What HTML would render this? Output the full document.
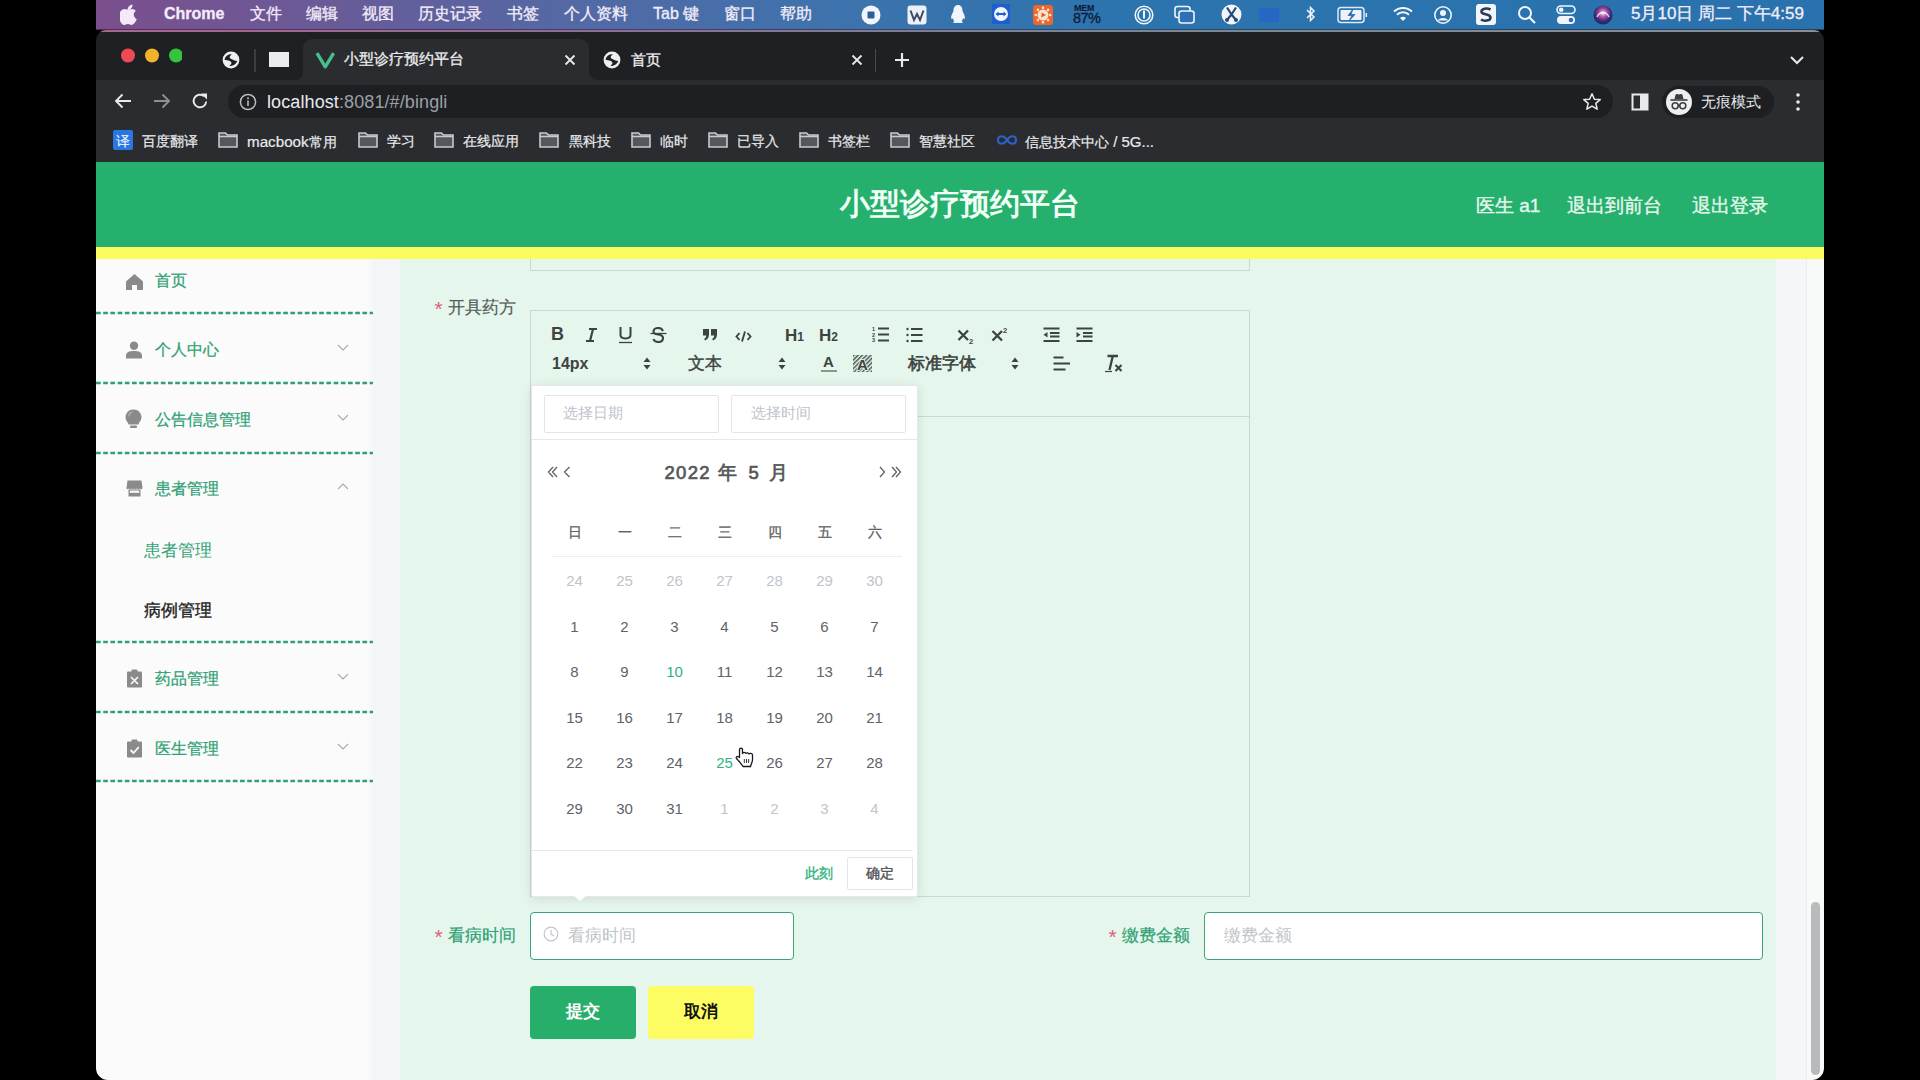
<!DOCTYPE html>
<html><head><meta charset="utf-8">
<style>
*{margin:0;padding:0;box-sizing:border-box}
html,body{width:1920px;height:1080px;overflow:hidden;background:#000;font-family:"Liberation Sans",sans-serif}
.a{position:absolute}
.t{position:absolute;white-space:nowrap;line-height:1}
#menubar{left:96px;top:0;width:1728px;height:30px;background:linear-gradient(90deg,#7a4f8e 0%,#77518f 3%,#675c99 14.7%,#5568a4 26.3%,#3d73ac 43%,#2c74ae 59%,#2a72ad 100%)}
#menubar .t{color:#f4ecf8;font-size:16px;top:6px;-webkit-text-stroke:0.3px #f4ecf8}
#win{left:96px;top:30px;width:1728px;height:1050px;background:#1f2023;border-radius:10px 10px 0 0;overflow:hidden}
#toolbar{left:0;top:50px;width:1728px;height:82px;background:#2b2c2f}
#omni{left:132px;top:55px;width:1385px;height:33px;background:#1e1f22;border-radius:17px}
.dash{position:absolute;left:0;width:276px;height:3px;background:repeating-linear-gradient(90deg,#34a578 0 8px,transparent 8px 12px)}
.bmk{top:103.5px;font-size:14px;color:#e8eaed;-webkit-text-stroke:0.2px #e8eaed}
.mi{position:absolute;color:#2ea876;font-size:17px;line-height:1;white-space:nowrap}

.pg{position:absolute}
.zh{position:absolute;white-space:nowrap;line-height:1}
.ico{position:absolute}
.cal{position:absolute;width:40px;text-align:center;font-size:15px;line-height:1;color:#606266}
.cal.o{color:#c0c4cc}
.cal.g{color:#2fb380}
.wk{position:absolute;width:40px;text-align:center;font-size:14px;line-height:1;color:#606266;-webkit-text-stroke:0.3px #606266}
</style></head><body>
<div id="menubar" class="a">
  <div class="a" style="left:0;top:29px;width:1728px;height:1px;background:linear-gradient(90deg,#5a2a55,#4a3a6a 30%,#2c4a66 60%,#24405a)"></div>

  <svg class="a" style="left:24px;top:4px" width="18" height="21" viewBox="0 0 18 21"><path fill="#f3e9f7" d="M12.5 0.5c0.2 1.5-0.5 3-1.4 4s-2.3 1.6-3.5 1.5c-0.2-1.4 0.5-2.9 1.4-3.8 1-1 2.4-1.6 3.5-1.7zM16.8 15.2c-0.5 1.1-0.7 1.6-1.4 2.6-0.9 1.4-2.2 3.1-3.8 3.1-1.4 0-1.8-0.9-3.7-0.9s-2.3 0.9-3.7 0.9c-1.6 0-2.8-1.6-3.7-3C-1.1 14 -1.4 9.5 0.6 7.2 1.6 5.9 3.2 5 4.7 5c1.5 0 2.5 0.9 3.8 0.9 1.2 0 2-0.9 3.7-0.9 1.3 0 2.7 0.7 3.7 2-3.3 1.8-2.7 6.5 0.9 8.2z"/></svg>
  <svg class="a" style="left:765px;top:5px" width="20" height="20"><circle cx="10" cy="10" r="9.5" fill="#f2f5fb"/><rect x="6.5" y="6.5" width="7" height="7" rx="1" fill="#2d5d9c"/></svg>
  <svg class="a" style="left:811px;top:5px" width="20" height="20"><rect x="0.5" y="0.5" width="19" height="19" rx="3" fill="#eef2f8"/><path d="M3.5 5.5 L7 15 L10 9 L13 15 L16.5 5.5" stroke="#3c4a66" stroke-width="2" fill="none"/></svg>
  <svg class="a" style="left:853px;top:4px" width="18" height="21"><path fill="#f2f5fb" d="M9 1c3 0 4.5 2.5 4.5 5.5 0 1 0.5 1.5 1.2 3 1 2 1.6 4 0.8 5.2-0.4 0.5-1 0-1.5-0.7 0 1.3-0.6 2.5-1.5 3.2 1 0.4 1.5 0.8 1.2 1.3-0.4 0.6-3 0.5-4.7 0.2-1.7 0.3-4.3 0.4-4.7-0.2-0.3-0.5 0.2-0.9 1.2-1.3-0.9-0.7-1.5-1.9-1.5-3.2-0.5 0.7-1.1 1.2-1.5 0.7-0.8-1.2-0.2-3.2 0.8-5.2 0.7-1.5 1.2-2 1.2-3C4.5 3.5 6 1 9 1z"/></svg>
  <svg class="a" style="left:896px;top:4px" width="18" height="20"><rect x="0" y="0" width="18" height="20" fill="#1e5fd0"/><circle cx="9" cy="10" r="7" fill="#f2f5fb"/><path d="M3.5 10 L6.5 7.5 V9 H11.5 V7.5 L14.5 10 L11.5 12.5 V11 H6.5 V12.5Z" fill="#1e5fd0"/></svg>
  <svg class="a" style="left:937px;top:5px" width="20" height="20"><rect x="0" y="0" width="20" height="20" rx="3" fill="#f0652a"/><circle cx="10" cy="10" r="5.5" fill="#fbe3cf"/><path d="M8.5 7.5 L13 10 L8.5 12.5Z" fill="#e8572a"/><g fill="#fbe3cf"><circle cx="10" cy="2.8" r="1.3"/><circle cx="10" cy="17.2" r="1.3"/><circle cx="2.8" cy="10" r="1.3"/><circle cx="17.2" cy="10" r="1.3"/><circle cx="4.9" cy="4.9" r="1.3"/><circle cx="15.1" cy="4.9" r="1.3"/><circle cx="4.9" cy="15.1" r="1.3"/><circle cx="15.1" cy="15.1" r="1.3"/></g></svg>
  <div class="t" style="left:978px;top:4px;font-size:9px;font-weight:bold;color:#101a35;letter-spacing:-0.3px;-webkit-text-stroke:0.1px #101a35">MEM</div>
  <div class="t" style="left:977px;top:11px;font-size:14.5px;color:#101a35;letter-spacing:-0.6px;-webkit-text-stroke:0.3px #101a35">87%</div>
  <svg class="a" style="left:1038px;top:5px" width="20" height="20"><circle cx="10" cy="10" r="8.8" stroke="#f2f5fb" stroke-width="1.6" fill="none"/><circle cx="10" cy="10" r="6" stroke="#f2f5fb" stroke-width="1.6" fill="none"/><rect x="9" y="5.5" width="2" height="8" fill="#f2f5fb"/></svg>
  <svg class="a" style="left:1078px;top:5px" width="22" height="20"><rect x="1" y="1.5" width="15" height="11" rx="2.5" stroke="#f2f5fb" stroke-width="1.6" fill="none"/><rect x="5" y="6" width="15" height="12" rx="2.5" stroke="#f2f5fb" stroke-width="1.6" fill="#2e6fb6"/></svg>
  <svg class="a" style="left:1125px;top:4px" width="21" height="21"><circle cx="10.5" cy="10.5" r="10" fill="#f2f5fb"/><path d="M10.5 10.5 L6 3.5 M10.5 10.5 L15 3.5 M10.5 10.5 L6 16 M10.5 10.5 L15 16" stroke="#244a7a" stroke-width="2.2"/><circle cx="6" cy="16" r="2" fill="#244a7a"/><circle cx="15" cy="16" r="2" fill="#244a7a"/></svg>
  <div class="a" style="left:1163px;top:8px;width:20px;height:14px;background:#2767c4;border-radius:1px"></div>
  <svg class="a" style="left:1209px;top:4px" width="12" height="20"><path d="M2 6 L9 13 L5.5 16.5 V3.5 L9 7 L2 14" stroke="#f2f5fb" stroke-width="1.5" fill="none"/></svg>
  <svg class="a" style="left:1241px;top:6px" width="32" height="18"><rect x="1" y="1.5" width="26" height="15" rx="3" stroke="#dfe8f5" stroke-width="1.5" fill="none"/><rect x="3.5" y="4" width="21" height="10" rx="1" fill="#eef3fa"/><path d="M16 3 L11 9.5 H15 L12 15 L18 8.5 H14Z" fill="#2e6fb6" stroke="#2e6fb6" stroke-width="0.8"/><rect x="28.5" y="7" width="1.6" height="4" fill="#dfe8f5"/></svg>
  <svg class="a" style="left:1297px;top:5px" width="20" height="18"><path d="M1 6.5 A13 13 0 0 1 19 6.5" stroke="#f2f5fb" stroke-width="2" fill="none"/><path d="M4 9.8 A8.5 8.5 0 0 1 16 9.8" stroke="#f2f5fb" stroke-width="2" fill="none"/><path d="M7 13 A4 4 0 0 1 13 13 L10 16Z" fill="#f2f5fb"/></svg>
  <svg class="a" style="left:1337px;top:5px" width="20" height="20"><circle cx="10" cy="10" r="8.2" stroke="#f2f5fb" stroke-width="1.6" fill="none"/><circle cx="10" cy="8" r="3" fill="#f2f5fb"/><path d="M4.8 15.5 C6 12 14 12 15.2 15.5" fill="#f2f5fb"/></svg>
  <svg class="a" style="left:1380px;top:4px" width="20" height="22"><rect x="0" y="0" width="20" height="21" rx="3" fill="#f2f5fb"/><path d="M14.5 5.5 C11 3.5 5 4.5 5.5 8 C6 11 14.5 9.5 14.5 13.5 C14.5 17 8 17.5 5 15.5" stroke="#2b3a55" stroke-width="2.6" fill="none"/></svg>
  <svg class="a" style="left:1421px;top:5px" width="20" height="20"><circle cx="8" cy="8" r="6" stroke="#f2f5fb" stroke-width="2" fill="none"/><path d="M12.5 12.5 L18 18" stroke="#f2f5fb" stroke-width="2.2"/></svg>
  <svg class="a" style="left:1460px;top:5px" width="20" height="20"><rect x="1" y="1" width="18" height="7.5" rx="3.75" stroke="#f2f5fb" stroke-width="1.6" fill="none"/><circle cx="5.2" cy="4.75" r="2.3" fill="#f2f5fb"/><rect x="1" y="11" width="18" height="8" rx="4" fill="#f2f5fb"/><circle cx="15" cy="15" r="2.3" fill="#2e6fb6"/></svg>
  <svg class="a" style="left:1497px;top:5px" width="20" height="20"><defs><radialGradient id="siri" cx="50%" cy="40%" r="60%"><stop offset="0" stop-color="#e6f0ff"/><stop offset="0.35" stop-color="#b34fa6"/><stop offset="0.7" stop-color="#3a2a7a"/><stop offset="1" stop-color="#1d2a55"/></radialGradient></defs><circle cx="10" cy="10" r="9.5" fill="url(#siri)"/><path d="M4 12 C7 6 13 6 16 12" stroke="#ffffff" stroke-width="1.3" fill="none" opacity="0.8"/></svg>
  <div class="t" style="left:68px;font-weight:bold">Chrome</div>
  <div class="t" style="left:154px">文件</div>
  <div class="t" style="left:210px">编辑</div>
  <div class="t" style="left:266px">视图</div>
  <div class="t" style="left:322px">历史记录</div>
  <div class="t" style="left:411px">书签</div>
  <div class="t" style="left:468px">个人资料</div>
  <div class="t" style="left:557px">Tab 键</div>
  <div class="t" style="left:628px">窗口</div>
  <div class="t" style="left:684px">帮助</div>
  <div class="t" style="left:1535px;font-size:17px;top:5px">5月10日 周二 下午4:59</div>
</div>
<div id="win" class="a">

  <div class="a" style="left:0;top:0;width:1728px;height:1.5px;background:linear-gradient(90deg,#a86690,#8a7094 30%,#7a8696 60%,#8a8f96)"></div>
  <svg class="a" style="left:22px;top:18px" width="64" height="16"><circle cx="10" cy="7.5" r="7" fill="#ec4b54"/><circle cx="34" cy="7.5" r="7" fill="#f0b32b"/><circle cx="58" cy="7.5" r="7" fill="#34c43e"/></svg>
  <svg class="a" style="left:126px;top:21px" width="18" height="18" viewBox="0 0 18 18"><circle cx="9" cy="9" r="8.4" fill="#eeeff1"/><path d="M2.5 8.8 A6.8 6.8 0 0 1 9.8 3.2 C8.5 4.5 7.2 5.5 7.8 6.8 C8.5 8.2 10 8 11.5 9 C12.8 9.8 14 9.6 15.2 9.9 A6.8 6.8 0 0 1 7.4 14.8 C8.5 13.8 9.8 13 9.4 11.6 C9 10 7 9.5 5 9.2 Z" fill="#1f2023"/></svg>
  <div class="a" style="left:158px;top:19px;width:2px;height:23px;background:#3c3d41"></div>
  <div class="a" style="left:173px;top:22px;width:20px;height:15px;background:#ebecee"></div>
  <div class="a" style="left:207px;top:9px;width:286px;height:42px;background:#2b2c2f;border-radius:9px 9px 0 0"></div><svg class="a" style="left:199px;top:42px" width="8" height="8"><path d="M0 8 H8 V0 A8 8 0 0 1 0 8Z" fill="#2b2c2f"/></svg><svg class="a" style="left:493px;top:42px" width="8" height="8"><path d="M0 0 V8 H8 A8 8 0 0 1 0 0Z" fill="#2b2c2f"/></svg>
  <svg class="a" style="left:219px;top:21px" width="21" height="18"><path d="M2 2.2 L10.3 15.8 L18.6 2.2" stroke="#45c08c" stroke-width="3.4" fill="none" stroke-linejoin="round"/></svg>
  <div class="t" style="left:248px;top:22px;font-size:14.5px;color:#eceef0;-webkit-text-stroke:0.3px #eceef0">小型诊疗预约平台</div>
  <svg class="a" style="left:468px;top:24px" width="12" height="12"><path d="M1.5 1.5 L10.5 10.5 M10.5 1.5 L1.5 10.5" stroke="#e8eaed" stroke-width="1.8"/></svg>
  <svg class="a" style="left:507px;top:21px" width="18" height="18" viewBox="0 0 18 18"><circle cx="9" cy="9" r="8.4" fill="#eeeff1"/><path d="M2.5 8.8 A6.8 6.8 0 0 1 9.8 3.2 C8.5 4.5 7.2 5.5 7.8 6.8 C8.5 8.2 10 8 11.5 9 C12.8 9.8 14 9.6 15.2 9.9 A6.8 6.8 0 0 1 7.4 14.8 C8.5 13.8 9.8 13 9.4 11.6 C9 10 7 9.5 5 9.2 Z" fill="#1f2023"/></svg>
  <div class="t" style="left:535px;top:22px;font-size:15px;color:#eceef0;-webkit-text-stroke:0.3px #eceef0">首页</div>
  <svg class="a" style="left:755px;top:24px" width="12" height="12"><path d="M1.5 1.5 L10.5 10.5 M10.5 1.5 L1.5 10.5" stroke="#e8eaed" stroke-width="1.8"/></svg>
  <div class="a" style="left:779px;top:19px;width:1px;height:23px;background:#4a4b4f"></div>
  <svg class="a" style="left:798px;top:22px" width="16" height="16"><path d="M8 1 V15 M1 8 H15" stroke="#e8eaed" stroke-width="2.2"/></svg>
  <svg class="a" style="left:1693px;top:24px" width="16" height="12"><path d="M2 3 L8 9 L14 3" stroke="#e8eaed" stroke-width="2" fill="none"/></svg>
  <div id="toolbar" class="a">
    <svg class="a" style="left:18px;top:13px" width="18" height="16"><path d="M17 8 H2 M8.5 1.5 L2 8 L8.5 14.5" stroke="#e8eaed" stroke-width="1.9" fill="none"/></svg>
    <svg class="a" style="left:57px;top:13px" width="18" height="16"><path d="M1 8 H16 M9.5 1.5 L16 8 L9.5 14.5" stroke="#8e9094" stroke-width="1.9" fill="none"/></svg>
    <svg class="a" style="left:95px;top:12px" width="18" height="18"><path d="M15.2 9.5 A6.3 6.3 0 1 1 13 4.2" stroke="#e8eaed" stroke-width="1.9" fill="none"/><path d="M10 1.5 H16 V7.5Z" fill="#e8eaed"/></svg>
</div>
  <div id="omni" class="a">
    <svg class="a" style="left:11px;top:8px" width="18" height="18"><circle cx="9" cy="9" r="7.6" stroke="#b8babd" stroke-width="1.5" fill="none"/><rect x="8.2" y="7.5" width="1.6" height="5.5" fill="#b8babd"/><circle cx="9" cy="5.2" r="1" fill="#b8babd"/></svg>
    <div class="t" style="left:39px;top:8px;font-size:18px;letter-spacing:0.1px;color:#e8eaed">localhost<span style="color:#9aa0a6">:8081/#/bingli</span></div>
    <svg class="a" style="left:1354px;top:7px" width="20" height="20"><path d="M10 1.8 L12.4 7.2 L18.2 7.6 L13.8 11.4 L15.2 17.2 L10 14.1 L4.8 17.2 L6.2 11.4 L1.8 7.6 L7.6 7.2Z" stroke="#e8eaed" stroke-width="1.5" fill="none" stroke-linejoin="round"/></svg>
</div>
  <svg class="a" style="left:1535px;top:63px" width="18" height="18"><rect x="1.5" y="1.5" width="15" height="15" stroke="#e8eaed" stroke-width="2" fill="none"/><rect x="9" y="1.5" width="7.5" height="15" fill="#e8eaed"/></svg>
  <div class="a" style="left:1566px;top:56px;width:112px;height:32px;background:#1e1f22;border-radius:16px"></div>
  <svg class="a" style="left:1570px;top:59px" width="26" height="26"><circle cx="13" cy="13" r="13" fill="#eeeff1"/><path d="M8.5 10 L9.6 5.8 C9.8 5 10.3 4.8 11 5 L13 5.6 L15 5 C15.7 4.8 16.2 5 16.4 5.8 L17.5 10Z" fill="#3a3b3f"/><rect x="4.5" y="10.2" width="17" height="1.6" fill="#3a3b3f"/><circle cx="9.2" cy="16.8" r="3" stroke="#3a3b3f" stroke-width="1.5" fill="none"/><circle cx="16.8" cy="16.8" r="3" stroke="#3a3b3f" stroke-width="1.5" fill="none"/><path d="M12.2 16.5 H13.8" stroke="#3a3b3f" stroke-width="1.3"/></svg>
  <div class="t" style="left:1605px;top:64px;font-size:15px;color:#e8eaed">无痕模式</div>
  <svg class="a" style="left:1698px;top:62px" width="8" height="20"><circle cx="4" cy="3" r="1.8" fill="#e8eaed"/><circle cx="4" cy="10" r="1.8" fill="#e8eaed"/><circle cx="4" cy="17" r="1.8" fill="#e8eaed"/></svg>

  <svg class="a" style="left:17px;top:100px" width="20" height="20"><rect width="20" height="20" rx="2" fill="#2a76e4"/><text x="10" y="15.5" font-size="14" fill="#fff" text-anchor="middle" font-family="Liberation Sans">译</text></svg>
  <div class="t bmk" style="left:46px">百度翻译</div>
<svg class="a" style="left:122px;top:101px" width="20" height="17"><path d="M1 2 H7.5 L9.5 4 H19 V16 H1Z" stroke="#c8cacd" stroke-width="1.6" fill="#55575c"/><path d="M1 5.5 H19" stroke="#c8cacd" stroke-width="1.4"/></svg>
  <div class="t bmk" style="left:151px"><span style="font-size:15.2px">macbook</span>常用</div>
<svg class="a" style="left:262px;top:101px" width="20" height="17"><path d="M1 2 H7.5 L9.5 4 H19 V16 H1Z" stroke="#c8cacd" stroke-width="1.6" fill="#55575c"/><path d="M1 5.5 H19" stroke="#c8cacd" stroke-width="1.4"/></svg>
  <div class="t bmk" style="left:291px">学习</div>
<svg class="a" style="left:338px;top:101px" width="20" height="17"><path d="M1 2 H7.5 L9.5 4 H19 V16 H1Z" stroke="#c8cacd" stroke-width="1.6" fill="#55575c"/><path d="M1 5.5 H19" stroke="#c8cacd" stroke-width="1.4"/></svg>
  <div class="t bmk" style="left:367px">在线应用</div>
<svg class="a" style="left:443px;top:101px" width="20" height="17"><path d="M1 2 H7.5 L9.5 4 H19 V16 H1Z" stroke="#c8cacd" stroke-width="1.6" fill="#55575c"/><path d="M1 5.5 H19" stroke="#c8cacd" stroke-width="1.4"/></svg>
  <div class="t bmk" style="left:473px">黑科技</div>
<svg class="a" style="left:535px;top:101px" width="20" height="17"><path d="M1 2 H7.5 L9.5 4 H19 V16 H1Z" stroke="#c8cacd" stroke-width="1.6" fill="#55575c"/><path d="M1 5.5 H19" stroke="#c8cacd" stroke-width="1.4"/></svg>
  <div class="t bmk" style="left:564px">临时</div>
<svg class="a" style="left:612px;top:101px" width="20" height="17"><path d="M1 2 H7.5 L9.5 4 H19 V16 H1Z" stroke="#c8cacd" stroke-width="1.6" fill="#55575c"/><path d="M1 5.5 H19" stroke="#c8cacd" stroke-width="1.4"/></svg>
  <div class="t bmk" style="left:641px">已导入</div>
<svg class="a" style="left:703px;top:101px" width="20" height="17"><path d="M1 2 H7.5 L9.5 4 H19 V16 H1Z" stroke="#c8cacd" stroke-width="1.6" fill="#55575c"/><path d="M1 5.5 H19" stroke="#c8cacd" stroke-width="1.4"/></svg>
  <div class="t bmk" style="left:732px">书签栏</div>
<svg class="a" style="left:794px;top:101px" width="20" height="17"><path d="M1 2 H7.5 L9.5 4 H19 V16 H1Z" stroke="#c8cacd" stroke-width="1.6" fill="#55575c"/><path d="M1 5.5 H19" stroke="#c8cacd" stroke-width="1.4"/></svg>
  <div class="t bmk" style="left:823px">智慧社区</div>
  <svg class="a" style="left:900px;top:104px" width="22" height="12"><path d="M2 6 C2 1 8 1 11 6 C14 11 20 11 20 6 C20 1 14 1 11 6 C8 11 2 11 2 6Z" stroke="#2a62c9" stroke-width="2.2" fill="none"/></svg>
  <div class="t bmk" style="left:929px">信息技术中心<span style="font-size:15px"> / 5G...</span></div>

</div>
<div class="pg" style="left:96px;top:162px;width:1728px;height:918px;background:#e5f6ed"></div>
<div class="pg" style="left:96px;top:162px;width:1728px;height:85px;background:#25b06e"></div>
<div class="pg" style="left:96px;top:247px;width:1728px;height:12px;background:#fcfc5f"></div>
<div class="pg" style="left:96px;top:259px;width:304px;height:821px;background:linear-gradient(90deg,#fbfbfb 0px,#fbfbfb 270px,#f4f5f8 278px,#f4f5f8 304px)"></div>
<div class="pg" style="left:1776px;top:259px;width:48px;height:821px;background:#f4f6fa"></div>
<div class="pg" style="left:1806px;top:259px;width:18px;height:821px;background:#f8f9f9;border-left:1px solid #ebecef"></div>
<div class="pg" style="left:1811px;top:902px;width:9px;height:173px;background:#b9babe;border-radius:4.5px"></div>
<svg class="ico" style="left:96px;top:1068px" width="12" height="12"><path d="M0 0 V12 H12 A12 12 0 0 1 0 0Z" fill="#000"/></svg>
<svg class="ico" style="left:1812px;top:1068px" width="12" height="12"><path d="M12 0 V12 H0 A12 12 0 0 0 12 0Z" fill="#000"/></svg>
<div class="zh" style="left:840px;top:189px;font-size:30px;font-weight:bold;color:#f2fff6">小型诊疗预约平台</div>
<div class="zh" style="left:1476px;top:196px;font-size:19px;color:#e6f6ec;-webkit-text-stroke:0.4px #e6f6ec">医生 a1</div>
<div class="zh" style="left:1567px;top:196px;font-size:19px;color:#e6f6ec;-webkit-text-stroke:0.4px #e6f6ec">退出到前台</div>
<div class="zh" style="left:1692px;top:196px;font-size:19px;color:#e6f6ec;-webkit-text-stroke:0.4px #e6f6ec">退出登录</div>
<svg class="ico" style="left:96px;top:311.3px" width="277" height="4"><line x1="0" y1="2" x2="277" y2="2" stroke="#31a074" stroke-width="2.6" stroke-dasharray="4.7 2.5"/></svg>
<svg class="ico" style="left:96px;top:380.8px" width="277" height="4"><line x1="0" y1="2" x2="277" y2="2" stroke="#31a074" stroke-width="2.6" stroke-dasharray="4.7 2.5"/></svg>
<svg class="ico" style="left:96px;top:450.5px" width="277" height="4"><line x1="0" y1="2" x2="277" y2="2" stroke="#31a074" stroke-width="2.6" stroke-dasharray="4.7 2.5"/></svg>
<svg class="ico" style="left:96px;top:639.8px" width="277" height="4"><line x1="0" y1="2" x2="277" y2="2" stroke="#31a074" stroke-width="2.6" stroke-dasharray="4.7 2.5"/></svg>
<svg class="ico" style="left:96px;top:709.5px" width="277" height="4"><line x1="0" y1="2" x2="277" y2="2" stroke="#31a074" stroke-width="2.6" stroke-dasharray="4.7 2.5"/></svg>
<svg class="ico" style="left:96px;top:779.2px" width="277" height="4"><line x1="0" y1="2" x2="277" y2="2" stroke="#31a074" stroke-width="2.6" stroke-dasharray="4.7 2.5"/></svg>
<svg class="ico" style="left:125px;top:273px" width="19" height="18" viewBox="0 0 19 18"><path d="M9.5 1 L18 8.5 V17 H12 V12 H7 V17 H1 V8.5Z" fill="#8a8a8a"/></svg>
<svg class="ico" style="left:125px;top:341px" width="18" height="18" viewBox="0 0 18 18"><circle cx="9" cy="4.8" r="4.2" fill="#8a8a8a"/><path d="M1 15 C1 11 4 10 9 10 C14 10 17 11 17 15 V17.5 H1Z" fill="#8a8a8a"/></svg>
<svg class="ico" style="left:125px;top:409px" width="17" height="20" viewBox="0 0 17 20"><path d="M8.5 0.5 C13 0.5 16.5 4 16.5 8.2 C16.5 11.5 14 13 13.5 15.5 H3.5 C3 13 0.5 11.5 0.5 8.2 C0.5 4 4 0.5 8.5 0.5Z" fill="#8a8a8a"/><rect x="5" y="16.5" width="7" height="2.5" rx="1" fill="#8a8a8a"/><path d="M3.8 7.5 C4 5 5.5 3.5 7.5 3" stroke="#bdbdbd" stroke-width="1.1" fill="none"/></svg>
<svg class="ico" style="left:126px;top:480px" width="17" height="17" viewBox="0 0 17 17"><path d="M1.5 0.5 H15.5 L16.5 8 C16.3 9.6 14.2 9.6 13.8 8.2 C13.4 9.6 11.3 9.6 10.9 8.2 C10.5 9.6 8.4 9.6 8 8.2 C7.6 9.6 5.5 9.6 5.1 8.2 C4.7 9.6 2.6 9.6 2.2 8.2 C1.8 9.6 0.4 9.4 0.5 8Z" fill="#8a8a8a"/><path d="M2.5 9.5 V16.5 H14.5 V9.5" fill="#8a8a8a"/><rect x="3.8" y="10.6" width="9.4" height="2.2" fill="#fbfbfb"/></svg>
<svg class="ico" style="left:126px;top:669px" width="17" height="19" viewBox="0 0 17 19"><rect x="1" y="2.5" width="15" height="16" rx="1" fill="#8a8a8a"/><rect x="5.5" y="0.5" width="6" height="3" rx="1" fill="#8a8a8a"/><path d="M5 8 L12 15 M12 8 L5 15" stroke="#fbfbfb" stroke-width="1.6"/></svg>
<svg class="ico" style="left:126px;top:739px" width="17" height="19" viewBox="0 0 17 19"><rect x="1" y="2.5" width="15" height="16" rx="1" fill="#8a8a8a"/><rect x="5.5" y="0.5" width="6" height="3" rx="1" fill="#8a8a8a"/><path d="M4.5 11 L7.5 14 L12.8 8" stroke="#fbfbfb" stroke-width="1.8" fill="none"/></svg>
<div class="zh" style="left:155px;top:272px;font-size:16.3px;color:#2ea174;-webkit-text-stroke:0.25px #2ea174">首页</div>
<div class="zh" style="left:155px;top:341px;font-size:16.3px;color:#2ea174;-webkit-text-stroke:0.25px #2ea174">个人中心</div>
<div class="zh" style="left:155px;top:411px;font-size:16.3px;color:#2ea174;-webkit-text-stroke:0.25px #2ea174">公告信息管理</div>
<div class="zh" style="left:155px;top:480px;font-size:16.3px;color:#2ea174;-webkit-text-stroke:0.25px #2ea174">患者管理</div>
<div class="zh" style="left:155px;top:670px;font-size:16.3px;color:#2ea174;-webkit-text-stroke:0.25px #2ea174">药品管理</div>
<div class="zh" style="left:155px;top:740px;font-size:16.3px;color:#2ea174;-webkit-text-stroke:0.25px #2ea174">医生管理</div>
<div class="zh" style="left:144px;top:542px;font-size:16.5px;color:#2ea174">患者管理</div>
<div class="zh" style="left:144px;top:602px;font-size:16.5px;color:#222;-webkit-text-stroke:0.35px #222">病例管理</div>
<svg class="ico" style="left:337px;top:344px" width="12" height="7"><path d="M1 1 L6 6 L11 1" stroke="#a8aaad" stroke-width="1.1" fill="none"/></svg>
<svg class="ico" style="left:337px;top:414px" width="12" height="7"><path d="M1 1 L6 6 L11 1" stroke="#a8aaad" stroke-width="1.1" fill="none"/></svg>
<svg class="ico" style="left:337px;top:483px" width="12" height="7"><path d="M1 6 L6 1 L11 6" stroke="#a8aaad" stroke-width="1.1" fill="none"/></svg>
<svg class="ico" style="left:337px;top:673px" width="12" height="7"><path d="M1 1 L6 6 L11 1" stroke="#a8aaad" stroke-width="1.1" fill="none"/></svg>
<svg class="ico" style="left:337px;top:743px" width="12" height="7"><path d="M1 1 L6 6 L11 1" stroke="#a8aaad" stroke-width="1.1" fill="none"/></svg>
<div class="pg" style="left:530px;top:259px;width:720px;height:12px;border:1px solid #cdd6d1;border-top:none"></div>
<div class="zh" style="left:434.5px;top:297.5px;font-size:21px;color:#e0607a">*</div>
<div class="zh" style="left:448px;top:299px;font-size:16.5px;color:#565d59;-webkit-text-stroke:0.2px #565d59">开具药方</div>
<div class="pg" style="left:530px;top:310px;width:720px;height:587px;border:1px solid #cdd6d1"></div>
<div class="pg" style="left:531px;top:416px;width:718px;height:1px;background:#cdd6d1"></div>
<div class="zh" style="left:551px;top:325px;font-size:18px;font-weight:bold;color:#3d433f">B</div>
<svg class="ico" style="left:585px;top:328px" width="13" height="14"><path d="M4 1 H12 M1 13 H9 M8 1 L5 13" stroke="#3d433f" stroke-width="2.2" fill="none"/></svg>
<svg class="ico" style="left:618px;top:326px" width="15" height="18"><path d="M2.5 1 V9 C2.5 13.5 12.5 13.5 12.5 9 V1" stroke="#3d433f" stroke-width="2" fill="none"/><path d="M1 16.5 H14" stroke="#3d433f" stroke-width="1.3"/></svg>
<svg class="ico" style="left:650px;top:327px" width="17" height="16"><path d="M13 4 C12 1.5 9.5 1 8 1 C5 1 3.5 2.5 3.5 4.5 C3.5 6 4.5 7 8 7.5 C11.5 8 13 9 13 11 C13 13.5 11 15 8.3 15 C5.5 15 4 13.8 3.5 12" stroke="#3d433f" stroke-width="2.1" fill="none"/><path d="M0.5 6.5 H16.5" stroke="#3d433f" stroke-width="1.3"/></svg>
<svg class="ico" style="left:702px;top:328px" width="16" height="13"><path d="M1 1 H7 V6.5 C7 9.5 5.5 11.5 3 12.5 L2.2 11 C3.5 10.2 4.2 9 4.2 7.5 H1Z M9 1 H15 V6.5 C15 9.5 13.5 11.5 11 12.5 L10.2 11 C11.5 10.2 12.2 9 12.2 7.5 H9Z" fill="#3d433f"/></svg>
<svg class="ico" style="left:735px;top:331px" width="17" height="11"><path d="M4.5 2 L1.5 5.5 L4.5 9 M12.5 2 L15.5 5.5 L12.5 9 M10 0.5 L7 10.5" stroke="#3d433f" stroke-width="1.9" fill="none"/></svg>
<div class="zh" style="left:785px;top:327px;font-size:17px;font-weight:bold;color:#3d433f">H<span style="font-size:12px">1</span></div>
<div class="zh" style="left:819px;top:327px;font-size:17px;font-weight:bold;color:#3d433f">H<span style="font-size:12px">2</span></div>
<svg class="ico" style="left:872px;top:326px" width="18" height="17"><path d="M6 2.5 H17 M6 8.5 H17 M6 14.5 H17" stroke="#3d433f" stroke-width="2.2"/><text x="0" y="5" font-size="5.5" font-weight="bold" fill="#3d433f" font-family="Liberation Sans">1</text><text x="0" y="10.5" font-size="5.5" font-weight="bold" fill="#3d433f" font-family="Liberation Sans">2</text><text x="0" y="16" font-size="5.5" font-weight="bold" fill="#3d433f" font-family="Liberation Sans">3</text></svg>
<svg class="ico" style="left:906px;top:327px" width="17" height="16"><path d="M5 2 H16.5 M5 8 H16.5 M5 14 H16.5" stroke="#3d433f" stroke-width="2.2"/><circle cx="1.5" cy="2" r="1.2" fill="#3d433f"/><circle cx="1.5" cy="8" r="1.2" fill="#3d433f"/><circle cx="1.5" cy="14" r="1.2" fill="#3d433f"/></svg>
<svg class="ico" style="left:957px;top:329px" width="18" height="15"><path d="M1.5 1.5 L11 11 M11 1.5 L1.5 11" stroke="#3d433f" stroke-width="2.3"/><text x="12" y="14.5" font-size="7.5" font-weight="bold" fill="#3d433f" font-family="Liberation Sans">2</text></svg>
<svg class="ico" style="left:991px;top:326px" width="18" height="16"><path d="M1.5 5 L11 14.5 M11 5 L1.5 14.5" stroke="#3d433f" stroke-width="2.3"/><text x="12" y="6.5" font-size="7.5" font-weight="bold" fill="#3d433f" font-family="Liberation Sans">2</text></svg>
<svg class="ico" style="left:1043px;top:327px" width="17" height="15"><path d="M0.5 1.5 H16.5 M7 6 H16.5 M7 9.5 H16.5 M0.5 14 H16.5" stroke="#3d433f" stroke-width="2"/><path d="M0.5 7.8 L4.5 5 V10.6Z" fill="#3d433f"/></svg>
<svg class="ico" style="left:1076px;top:327px" width="17" height="15"><path d="M0.5 1.5 H16.5 M7 6 H16.5 M7 9.5 H16.5 M0.5 14 H16.5" stroke="#3d433f" stroke-width="2"/><path d="M4.5 7.8 L0.5 5 V10.6Z" fill="#3d433f"/></svg>
<div class="zh" style="left:552px;top:356px;font-size:16px;font-weight:bold;color:#3d433f">14px</div>
<svg class="ico" style="left:643px;top:357px" width="8" height="13"><path d="M4 0.5 L7.5 5 H0.5Z M4 12.5 L7.5 8 H0.5Z" fill="#3d433f"/></svg>
<div class="zh" style="left:688px;top:355px;font-size:16.5px;color:#3d433f;-webkit-text-stroke:0.4px #3d433f">文本</div>
<svg class="ico" style="left:778px;top:357px" width="8" height="13"><path d="M4 0.5 L7.5 5 H0.5Z M4 12.5 L7.5 8 H0.5Z" fill="#3d433f"/></svg>
<div class="zh" style="left:823px;top:354px;font-size:15px;font-weight:bold;color:#3d433f">A</div>
<div class="pg" style="left:821px;top:370px;width:16px;height:2px;background:#7f9d8d"></div>
<svg class="ico" style="left:853px;top:355px" width="19" height="17"><defs><pattern id="hatch" width="3" height="3" patternUnits="userSpaceOnUse" patternTransform="rotate(45)"><rect width="1.5" height="3" fill="#4d5550"/></pattern></defs><rect width="19" height="17" fill="url(#hatch)"/><text x="9.5" y="14.5" font-size="15" font-weight="bold" text-anchor="middle" fill="#3d433f" font-family="Liberation Sans" stroke="#e5f6ed" stroke-width="1.6" paint-order="stroke">A</text></svg>
<div class="zh" style="left:908px;top:355px;font-size:16.5px;color:#3d433f;-webkit-text-stroke:0.6px #3d433f">标准字体</div>
<svg class="ico" style="left:1011px;top:357px" width="8" height="13"><path d="M4 0.5 L7.5 5 H0.5Z M4 12.5 L7.5 8 H0.5Z" fill="#3d433f"/></svg>
<svg class="ico" style="left:1053px;top:356px" width="18" height="15"><path d="M0.5 1.5 H10.5 M0.5 7.5 H17 M0.5 13.5 H12.5" stroke="#3d433f" stroke-width="2"/></svg>
<svg class="ico" style="left:1104px;top:354px" width="19" height="19"><path d="M3.5 2 H14 M8.8 2 L5.5 16" stroke="#3d433f" stroke-width="2.3"/><path d="M1 17.5 H8" stroke="#3d433f" stroke-width="1.2"/><path d="M11.5 11 L17.5 17 M17.5 11 L11.5 17" stroke="#3d433f" stroke-width="2.1"/></svg>
<div class="pg" style="left:531px;top:385px;width:387px;height:512px;background:#fff;box-shadow:0 2px 12px rgba(0,0,0,0.10);border:1px solid #e4e7ed;border-radius:2px"></div>
<div class="pg" style="left:544px;top:395px;width:175px;height:38px;border:1px solid #e2e4e8;border-radius:2px;background:#fff"></div>
<div class="pg" style="left:731px;top:395px;width:175px;height:38px;border:1px solid #e2e4e8;border-radius:2px;background:#fff"></div>
<div class="zh" style="left:563px;top:405px;font-size:15px;color:#c0c4cc">选择日期</div>
<div class="zh" style="left:751px;top:405px;font-size:15px;color:#c0c4cc">选择时间</div>
<div class="pg" style="left:532px;top:439px;width:385px;height:1px;background:#e4e7ed"></div>
<svg class="ico" style="left:547px;top:466px" width="26" height="12"><path d="M6 1 L1.5 6 L6 11 M10 1 L5.5 6 L10 11 M22.5 1 L17.5 6 L22.5 11" stroke="#606266" stroke-width="1.3" fill="none"/></svg>
<svg class="ico" style="left:878px;top:466px" width="26" height="12"><path d="M2 1 L6.5 6 L2 11 M14 1 L18.5 6 L14 11 M18 1 L22.5 6 L18 11" stroke="#606266" stroke-width="1.3" fill="none"/></svg>
<div class="zh" style="left:664.5px;top:464px;font-size:18.5px;color:#555759;letter-spacing:1.3px;-webkit-text-stroke:0.7px #555759">2022</div>
<div class="zh" style="left:718px;top:464px;font-size:18.5px;color:#555759;-webkit-text-stroke:0.7px #555759">年</div>
<div class="zh" style="left:748.5px;top:464px;font-size:18.5px;color:#555759;-webkit-text-stroke:0.7px #555759">5</div>
<div class="zh" style="left:769px;top:464px;font-size:18.5px;color:#555759;-webkit-text-stroke:0.7px #555759">月</div>
<div class="wk" style="left:554.5px;top:525px">日</div>
<div class="wk" style="left:604.5px;top:525px">一</div>
<div class="wk" style="left:654.5px;top:525px">二</div>
<div class="wk" style="left:704.5px;top:525px">三</div>
<div class="wk" style="left:754.5px;top:525px">四</div>
<div class="wk" style="left:804.5px;top:525px">五</div>
<div class="wk" style="left:854.5px;top:525px">六</div>
<div class="pg" style="left:552px;top:556px;width:350px;height:1px;background:#ebeef5"></div>
<div class="cal o" style="left:554.5px;top:573.0px">24</div>
<div class="cal o" style="left:604.5px;top:573.0px">25</div>
<div class="cal o" style="left:654.5px;top:573.0px">26</div>
<div class="cal o" style="left:704.5px;top:573.0px">27</div>
<div class="cal o" style="left:754.5px;top:573.0px">28</div>
<div class="cal o" style="left:804.5px;top:573.0px">29</div>
<div class="cal o" style="left:854.5px;top:573.0px">30</div>
<div class="cal " style="left:554.5px;top:618.5px">1</div>
<div class="cal " style="left:604.5px;top:618.5px">2</div>
<div class="cal " style="left:654.5px;top:618.5px">3</div>
<div class="cal " style="left:704.5px;top:618.5px">4</div>
<div class="cal " style="left:754.5px;top:618.5px">5</div>
<div class="cal " style="left:804.5px;top:618.5px">6</div>
<div class="cal " style="left:854.5px;top:618.5px">7</div>
<div class="cal " style="left:554.5px;top:664.0px">8</div>
<div class="cal " style="left:604.5px;top:664.0px">9</div>
<div class="cal g" style="left:654.5px;top:664.0px">10</div>
<div class="cal " style="left:704.5px;top:664.0px">11</div>
<div class="cal " style="left:754.5px;top:664.0px">12</div>
<div class="cal " style="left:804.5px;top:664.0px">13</div>
<div class="cal " style="left:854.5px;top:664.0px">14</div>
<div class="cal " style="left:554.5px;top:709.5px">15</div>
<div class="cal " style="left:604.5px;top:709.5px">16</div>
<div class="cal " style="left:654.5px;top:709.5px">17</div>
<div class="cal " style="left:704.5px;top:709.5px">18</div>
<div class="cal " style="left:754.5px;top:709.5px">19</div>
<div class="cal " style="left:804.5px;top:709.5px">20</div>
<div class="cal " style="left:854.5px;top:709.5px">21</div>
<div class="cal " style="left:554.5px;top:755.0px">22</div>
<div class="cal " style="left:604.5px;top:755.0px">23</div>
<div class="cal " style="left:654.5px;top:755.0px">24</div>
<div class="cal g" style="left:704.5px;top:755.0px">25</div>
<div class="cal " style="left:754.5px;top:755.0px">26</div>
<div class="cal " style="left:804.5px;top:755.0px">27</div>
<div class="cal " style="left:854.5px;top:755.0px">28</div>
<div class="cal " style="left:554.5px;top:800.5px">29</div>
<div class="cal " style="left:604.5px;top:800.5px">30</div>
<div class="cal " style="left:654.5px;top:800.5px">31</div>
<div class="cal o" style="left:704.5px;top:800.5px">1</div>
<div class="cal o" style="left:754.5px;top:800.5px">2</div>
<div class="cal o" style="left:804.5px;top:800.5px">3</div>
<div class="cal o" style="left:854.5px;top:800.5px">4</div>
<div class="pg" style="left:532px;top:850px;width:381px;height:1px;background:#e4e7ed"></div>
<div class="zh" style="left:805px;top:866px;font-size:14px;color:#2fb380;-webkit-text-stroke:0.35px #2fb380">此刻</div>
<div class="pg" style="left:847px;top:857px;width:66px;height:33px;border:1px solid #e2e4e8;border-radius:1.5px;background:#fff"></div>
<div class="zh" style="left:866px;top:866px;font-size:14px;color:#505356;-webkit-text-stroke:0.35px #505356">确定</div>
<svg class="ico" style="left:574px;top:896px" width="12" height="6"><path d="M0 0 L6 5 L12 0Z" fill="#fff"/></svg>
<svg class="ico" style="left:735px;top:747px" width="20" height="21" viewBox="0 0 20 21"><path d="M4.5 10.5 V2.5 C4.5 0.8 7.5 0.8 7.5 2.5 V6.5 C8 5 10.5 5 11 6.5 C11.5 5.5 13.5 5.5 14 7 C14.5 6 17.5 6 17.5 8 V13 C17.5 15 16 17 15.5 19.5 H8 C6 16.5 4 14 1.5 11.5 C0.5 10.5 2 8.8 3.5 9.8 Z" fill="#fff" stroke="#1a1a1a" stroke-width="1.3" stroke-linejoin="round"/><path d="M9.3 12 V16 M11.5 12 V16 M13.7 12 V16" stroke="#1a1a1a" stroke-width="0.9"/></svg>
<div class="zh" style="left:434.5px;top:925.5px;font-size:21px;color:#e0607a">*</div>
<div class="zh" style="left:448px;top:927px;font-size:16.5px;color:#2ea174;-webkit-text-stroke:0.2px #2ea174">看病时间</div>
<div class="pg" style="left:530px;top:912px;width:264px;height:48px;border:1.5px solid #3aa57a;border-radius:4px;background:#fff"></div>
<svg class="ico" style="left:543px;top:926px" width="16" height="16"><circle cx="8" cy="8" r="6.8" stroke="#c0c4cc" stroke-width="1.2" fill="none"/><path d="M8 4 V8.3 L11 9.8" stroke="#c0c4cc" stroke-width="1.2" fill="none"/></svg>
<div class="zh" style="left:568px;top:927px;font-size:16.5px;color:#c0c4cc">看病时间</div>
<div class="zh" style="left:1108.5px;top:925.5px;font-size:21px;color:#e0607a">*</div>
<div class="zh" style="left:1122px;top:927px;font-size:16.5px;color:#2ea174;-webkit-text-stroke:0.2px #2ea174">缴费金额</div>
<div class="pg" style="left:1204px;top:912px;width:559px;height:48px;border:1.5px solid #3aa57a;border-radius:4px;background:#fff"></div>
<div class="zh" style="left:1224px;top:927px;font-size:16.5px;color:#c0c4cc">缴费金额</div>
<div class="pg" style="left:530px;top:986px;width:106px;height:53px;background:#27ae6b;border-radius:4px"></div>
<div class="zh" style="left:566px;top:1003px;font-size:17px;font-weight:bold;color:#fff">提交</div>
<div class="pg" style="left:648px;top:986px;width:106px;height:53px;background:#fdfd63;border-radius:4px"></div>
<div class="zh" style="left:684px;top:1003px;font-size:17px;font-weight:bold;color:#111">取消</div>
</body></html>
